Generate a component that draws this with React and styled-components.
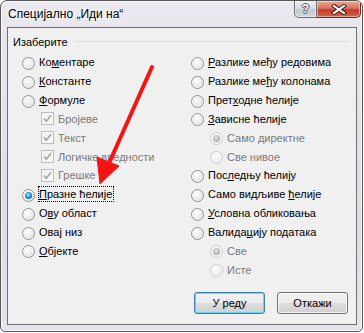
import React from "react";
import styled, { createGlobalStyle } from "styled-components";

const GlobalStyle = createGlobalStyle`
  html, body { margin: 0; padding: 0; background: #ffffff; }
  body { font-family: "Liberation Sans", Arial, sans-serif; }
  * { box-sizing: border-box; }
`;

const Stage = styled.div`
  position: relative;
  width: 364px;
  height: 333px;
`;

const Window = styled.div`
  width: 363px;
  height: 332px;
  display: flex;
  flex-direction: column;
  border: 1px solid #565656;
  border-radius: 7px 7px 5px 5px;
  background: linear-gradient(180deg, #ebe9ef 0%, #e2e0e8 40%, #dedce6 70%, #e6e3ea 100%);
  box-shadow: inset 0 0 0 1px rgba(255, 255, 255, 0.75);
  overflow: hidden;
`;

const TitleBar = styled.div`
  height: 26px;
  display: flex;
  align-items: flex-start;
  padding: 0 1px 0 7px;
`;

const Title = styled.div`
  flex: 1;
  margin-top: 6px;
  font-size: 12px;
  line-height: 14px;
  color: #000;
  text-shadow: 0 0 6px #fff, 0 0 3px #fff;
`;

const CaptionButtons = styled.div`
  display: flex;
`;

const CaptionButton = styled.div`
  width: ${p => (p.$variant === "close" ? "44px" : "23px")};
  height: 17px;
  display: flex;
  align-items: center;
  justify-content: center;
  border: 1px solid ${p => (p.$variant === "close" ? "#6a2a20" : "#6d6d70")};
  border-top: none;
  border-left: ${p => (p.$variant === "close" ? "none" : undefined)};
  border-radius: ${p => (p.$variant === "close" ? "0 0 5px 0" : "0 0 0 5px")};
  background: ${p =>
    p.$variant === "close"
      ? "linear-gradient(180deg, #eaa898 0%, #d8735f 45%, #c23b24 55%, #d5654e 100%)"
      : "linear-gradient(180deg, #eceef2 0%, #d9dce2 45%, #c3c7cf 55%, #d3d6dc 100%)"};
  box-shadow: inset 0 0 0 1px rgba(255, 255, 255, 0.45);
  color: #fff;
  font: bold 12px "Liberation Sans", Arial, sans-serif;
  text-shadow: -1px 0 #555, 1px 0 #555, 0 -1px #555, 0 1px #555;
`;

const Client = styled.div`
  flex: 1;
  margin: 0 5px 6px 6px;
  border: 1px solid #707070;
  background: #f0f0f0;
  display: flex;
  flex-direction: column;
  padding-top: 7px;
  font-size: 11px;
  color: #000;
`;

const GroupHeader = styled.div`
  height: 14px;
  display: flex;
  align-items: center;
  gap: 6px;
  padding: 0 6px 0 5px;
`;

const GroupLabel = styled.span`
  line-height: 14px;
`;

const GroupLine = styled.div`
  flex: 1;
  height: 1px;
  margin-top: -1px;
  background: #d5dfe5;
`;

const Options = styled.div`
  display: grid;
  grid-template-columns: 169px 1fr;
  padding-left: 14px;
  margin-top: 4px;
`;

const Column = styled.div`
  display: flex;
  flex-direction: column;
`;

const Row = styled.div`
  height: 18.85px;
  display: flex;
  align-items: center;
  padding-left: ${p => (p.$indent ? "19px" : "0")};
  color: ${p => (p.$disabled ? "#7a7a7a" : "#000")};
`;

const Radio = styled.span`
  flex: none;
  width: 13px;
  height: 13px;
  margin-top: 2px;
  border-radius: 50%;
  display: flex;
  align-items: center;
  justify-content: center;
  border: 1px solid ${p => (p.$disabled ? "#cacaca" : "#929292")};
  background: ${p =>
    p.$disabled
      ? "radial-gradient(circle at 40% 35%, #fbfbfb 0%, #efefef 60%, #e3e3e3 100%)"
      : "radial-gradient(circle at 40% 35%, #ffffff 0%, #e9e9e9 55%, #cdcdcd 100%)"};
  box-shadow: inset 0 0 0 1px rgba(255, 255, 255, 0.6);
  &::after {
    content: "";
    display: ${p => (p.$checked ? "block" : "none")};
    width: 7px;
    height: 7px;
    border-radius: 50%;
    background: ${p =>
      p.$disabled
        ? "radial-gradient(circle at 45% 40%, #e4e4e4 0%, #b4b4b4 60%, #9a9a9a 100%)"
        : "radial-gradient(circle at 45% 40%, #a6ecff 0%, #2f96dc 45%, #0c3f7c 100%)"};
  }
`;

const Check = styled.span`
  flex: none;
  width: 13px;
  height: 13px;
  display: flex;
  align-items: center;
  justify-content: center;
  border: 1px solid #bdbdbd;
  background: linear-gradient(135deg, #f0f0f0 0%, #fafafa 100%);
  box-shadow: inset 0 0 0 1px #f7f7f7;
`;

const Label = styled.span`
  margin-left: 3px;
  padding: 0 1px 0 0;
  line-height: 14px;
  white-space: nowrap;
  border: 1px dotted ${p => (p.$focused ? "#000" : "transparent")};
`;

const Key = styled.u`
  text-decoration: underline;
  text-underline-offset: 1px;
`;

const ButtonBar = styled.div`
  display: flex;
  justify-content: flex-end;
  gap: 12px;
  padding-right: 8px;
  margin-top: 13px;
`;

const DialogButton = styled.button`
  width: 71px;
  height: 22px;
  padding: 0;
  font: 11px "Liberation Sans", Arial, sans-serif;
  color: #000;
  border-radius: 3px;
  border: 1px solid ${p => (p.$default ? "#3c7fb1" : "#707070")};
  background: linear-gradient(180deg, #f2f2f2 0%, #ebebeb 50%, #dddddd 51%, #cfcfcf 100%);
  box-shadow: inset 0 0 0 1px ${p => (p.$default ? "#6ed0f6" : "rgba(255,255,255,0.8)")};
`;

const ArrowOverlay = styled.svg`
  position: absolute;
  left: 0;
  top: 0;
  pointer-events: none;
`;

function Text({ text, k }) {
  if (k == null) return text;
  return (
    <>
      {text.slice(0, k)}
      <Key>{text[k]}</Key>
      {text.slice(k + 1)}
    </>
  );
}

function RadioRow({ text, k, checked, disabled, indent, focused }) {
  return (
    <Row $disabled={disabled} $indent={indent}>
      <Radio $checked={checked} $disabled={disabled} />
      <Label $focused={focused}>
        <Text text={text} k={k} />
      </Label>
    </Row>
  );
}

function CheckRow({ text }) {
  return (
    <Row $disabled $indent>
      <Check>
        <svg width="11" height="11" viewBox="0 0 11 11">
          <path d="M2 5.6 L4.3 8.2 L9 2.2" fill="none" stroke="#a4a4a4" strokeWidth="1.6" />
        </svg>
      </Check>
      <Label>{text}</Label>
    </Row>
  );
}

const left = [
  { type: "radio", text: "Коментаре", k: 2 },
  { type: "radio", text: "Константе", k: 0 },
  { type: "radio", text: "Формуле", k: 0 },
  { type: "check", text: "Бројеве" },
  { type: "check", text: "Текст" },
  { type: "check", text: "Логичке вредности" },
  { type: "check", text: "Грешке" },
  { type: "radio", text: "Празне ћелије", k: 0, checked: true, focused: true },
  { type: "radio", text: "Ову област", k: 1 },
  { type: "radio", text: "Овај низ", k: 3 },
  { type: "radio", text: "Објекте", k: 0 },
];

const right = [
  { text: "Разлике међу редовима", k: 0 },
  { text: "Разлике међу колонама", k: 10 },
  { text: "Претходне ћелије", k: 4 },
  { text: "Зависне ћелије", k: 0 },
  { text: "Само директне", checked: true, disabled: true, indent: true },
  { text: "Све нивое", disabled: true, indent: true },
  { text: "Последњу ћелију", k: 3 },
  { text: "Само видљиве ћелије", k: 13 },
  { text: "Условна обликовања", k: 0 },
  { text: "Валидацију података", k: 6 },
  { text: "Све", checked: true, disabled: true, indent: true },
  { text: "Исте", disabled: true, indent: true },
];

export default function App() {
  return (
    <Stage>
      <GlobalStyle />
      <Window>
        <TitleBar>
          <Title>Специјално „Иди на“</Title>
          <CaptionButtons>
            <CaptionButton $variant="help">?</CaptionButton>
            <CaptionButton $variant="close">
              <svg width="16" height="11" viewBox="0 0 16 11">
                <path d="M3 2 L13 9 M13 2 L3 9" stroke="#4a1e16" strokeWidth="4" strokeLinecap="square" />
                <path d="M3 2 L13 9 M13 2 L3 9" stroke="#ffffff" strokeWidth="2" strokeLinecap="square" />
              </svg>
            </CaptionButton>
          </CaptionButtons>
        </TitleBar>
        <Client>
          <GroupHeader>
            <GroupLabel>Изаберите</GroupLabel>
            <GroupLine />
          </GroupHeader>
          <Options>
            <Column>
              {left.map(item =>
                item.type === "check" ? (
                  <CheckRow key={item.text} text={item.text} />
                ) : (
                  <RadioRow key={item.text} {...item} />
                )
              )}
            </Column>
            <Column>
              {right.map(item => (
                <RadioRow key={item.text} {...item} />
              ))}
            </Column>
          </Options>
          <ButtonBar>
            <DialogButton $default>У реду</DialogButton>
            <DialogButton>Откажи</DialogButton>
          </ButtonBar>
        </Client>
      </Window>
      <ArrowOverlay width="364" height="333" viewBox="0 0 364 333">
        <line x1="152" y1="67" x2="110" y2="161" stroke="#f41414" strokeWidth="4" strokeLinecap="round" />
        <polygon points="100,184 97,157 119,166" fill="#f41414" stroke="#f41414" strokeWidth="1" strokeLinejoin="round" />
      </ArrowOverlay>
    </Stage>
  );
}
